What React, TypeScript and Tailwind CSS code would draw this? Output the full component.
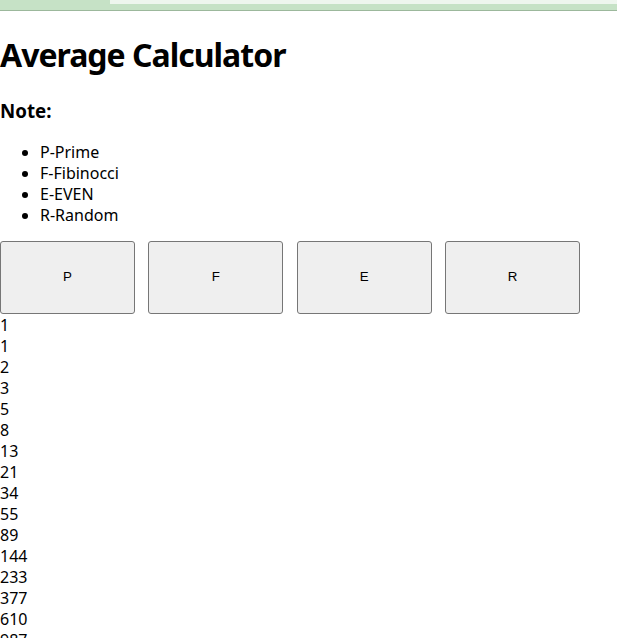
const NUMBERS = [1, 1, 2, 3, 5, 8, 13, 21, 34, 55, 89, 144, 233, 377, 610, 987];

const NOTES = ['P-Prime', 'F-Fibinocci', 'E-EVEN', 'R-Random'];

const BTN =
  'h-[73px] w-[135px] rounded-[3px] border border-[#767676] bg-[#efefef] text-[13.33px] text-black font-["Liberation_Sans",Arial,sans-serif]';

export default function App() {
  return (
    <div className="min-h-screen bg-white font-['Noto_Sans',sans-serif] text-black">
      <div className="relative h-[11px] border-b border-[#9cb89c] bg-[#c6e2c6]">
        <div className="absolute left-[110px] right-0 top-0 h-[4px] bg-[#eef6ee]" />
      </div>
      <h1 className="mt-[23px] text-[32px] font-bold leading-[42px] tracking-[-1px]">Average Calculator</h1>
      <h3 className="mt-[22px] text-[18.72px] font-bold leading-[25px]">Note:</h3>
      <ul className="mt-[18.5px] list-disc pl-10 text-base leading-[21px]">
        {NOTES.map((n) => (
          <li key={n}>{n}</li>
        ))}
      </ul>
      <div className="mt-[15px] flex gap-[13.33px]">
        {['P', 'F', 'E', 'R'].map((l) => (
          <button key={l} type="button" className={BTN}>
            {l}
          </button>
        ))}
      </div>
      <div className="mt-[1px] text-base leading-[21px]">
        {NUMBERS.map((n, i) => (
          <div key={i}>{n}</div>
        ))}
      </div>
    </div>
  );
}
